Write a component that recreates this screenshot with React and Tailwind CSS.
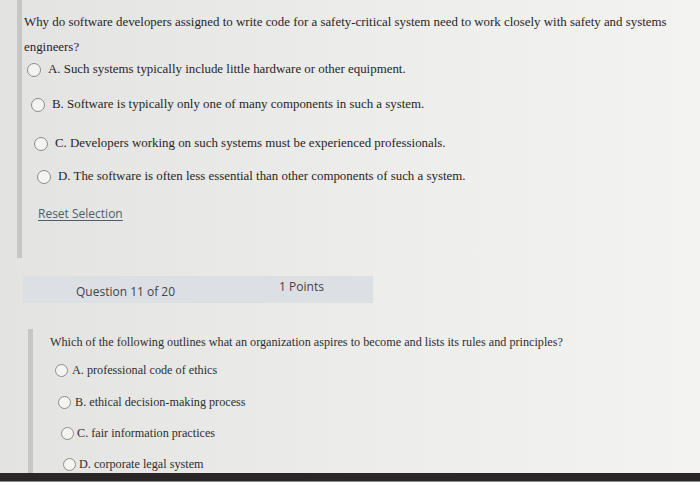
export default function App() {
  const serif = { fontFamily: '"Liberation Serif", "Times New Roman", serif' };
  const sans = { fontFamily: '"Open Sans", "Noto Sans", sans-serif' };
  const Radio = ({ size = 13 }) => (
    <span
      className="inline-block shrink-0 rounded-full border-[1.5px] border-[#8c8c8c] bg-[#f4f4f2]"
      style={{ width: size, height: size }}
    />
  );
  return (
    <div className="relative flex h-[482px] w-[700px] flex-col overflow-hidden bg-linear-to-r from-[#e3e3e1] via-[#ececea] to-[#f3f3f1]">
      {/* Question 10 */}
      <div className="flex h-[258px] shrink-0">
        <div className="ml-[17px] h-full w-[5px] bg-[#c6c6c6]" />
        <div className="pl-[2px] pt-[10px] text-[#262626]" style={serif}>
          <p className="w-[660px] text-[12.9px] leading-[25px]">
            Why do software developers assigned to write code for a safety-critical system need to work closely with safety and systems engineers?
          </p>
          <div className="flex h-[20px] items-center gap-[7px] pl-[3px] text-[12.9px]">
            <Radio size={14} />
            <span>A. Such systems typically include little hardware or other equipment.</span>
          </div>
          <div className="mt-[15px] flex h-[20px] items-center gap-[7px] pl-[7px] text-[12.9px]">
            <Radio size={14} />
            <span>B. Software is typically only one of many components in such a system.</span>
          </div>
          <div className="mt-[19px] flex h-[20px] items-center gap-[7px] pl-[10px] text-[12.9px]">
            <Radio size={14} />
            <span>C. Developers working on such systems must be experienced professionals.</span>
          </div>
          <div className="mt-[13px] flex h-[20px] items-center gap-[7px] pl-[13px] text-[12.9px]">
            <Radio size={14} />
            <span>D. The software is often less essential than other components of such a system.</span>
          </div>
          <div className="mt-[14px] pl-[14px]">
            <span className="text-[12px] leading-[20px] text-[#4d5d6c] underline underline-offset-2" style={sans}>
              Reset Selection
            </span>
          </div>
        </div>
      </div>

      {/* Header */}
      <div className="ml-[23px] mt-[18px] flex h-[27px] w-[350px] shrink-0 items-center bg-[#dcdfe4] text-[12px] text-[#444]" style={sans}>
        <span className="ml-[53px] mt-[4px]">Question 11 of 20</span>
        <span className="ml-[104px] mt-[-6px]">1 Points</span>
      </div>

      {/* Question 11 */}
      <div className="mt-[26px] flex flex-1">
        <div className="ml-[28px] h-full w-[5px] bg-[#c6c6c6]" />
        <div className="pl-[17px] pt-[4px] text-[#2e2e2e]" style={serif}>
          <p className="text-[12.2px] leading-[18px]">
            Which of the following outlines what an organization aspires to become and lists its rules and principles?
          </p>
          <div className="mt-[10px] flex h-[18px] items-center gap-[4px] pl-[5px] text-[12.2px]">
            <Radio size={13} />
            <span>A. professional code of ethics</span>
          </div>
          <div className="mt-[14px] flex h-[18px] items-center gap-[4px] pl-[8px] text-[12.2px]">
            <Radio size={13} />
            <span>B. ethical decision-making process</span>
          </div>
          <div className="mt-[13px] flex h-[18px] items-center gap-[3px] pl-[11px] text-[12.2px]">
            <Radio size={13} />
            <span>C. fair information practices</span>
          </div>
          <div className="mt-[13px] flex h-[18px] items-center gap-[3px] pl-[13px] text-[12.2px]">
            <Radio size={13} />
            <span>D. corporate legal system</span>
          </div>
        </div>
      </div>

      {/* Screen bezel */}
      <div className="h-[8px] w-full shrink-0 bg-[#2a2628]" />
      <div className="h-[2px] w-full shrink-0 bg-[#8a8a8a]" />
    </div>
  );
}
